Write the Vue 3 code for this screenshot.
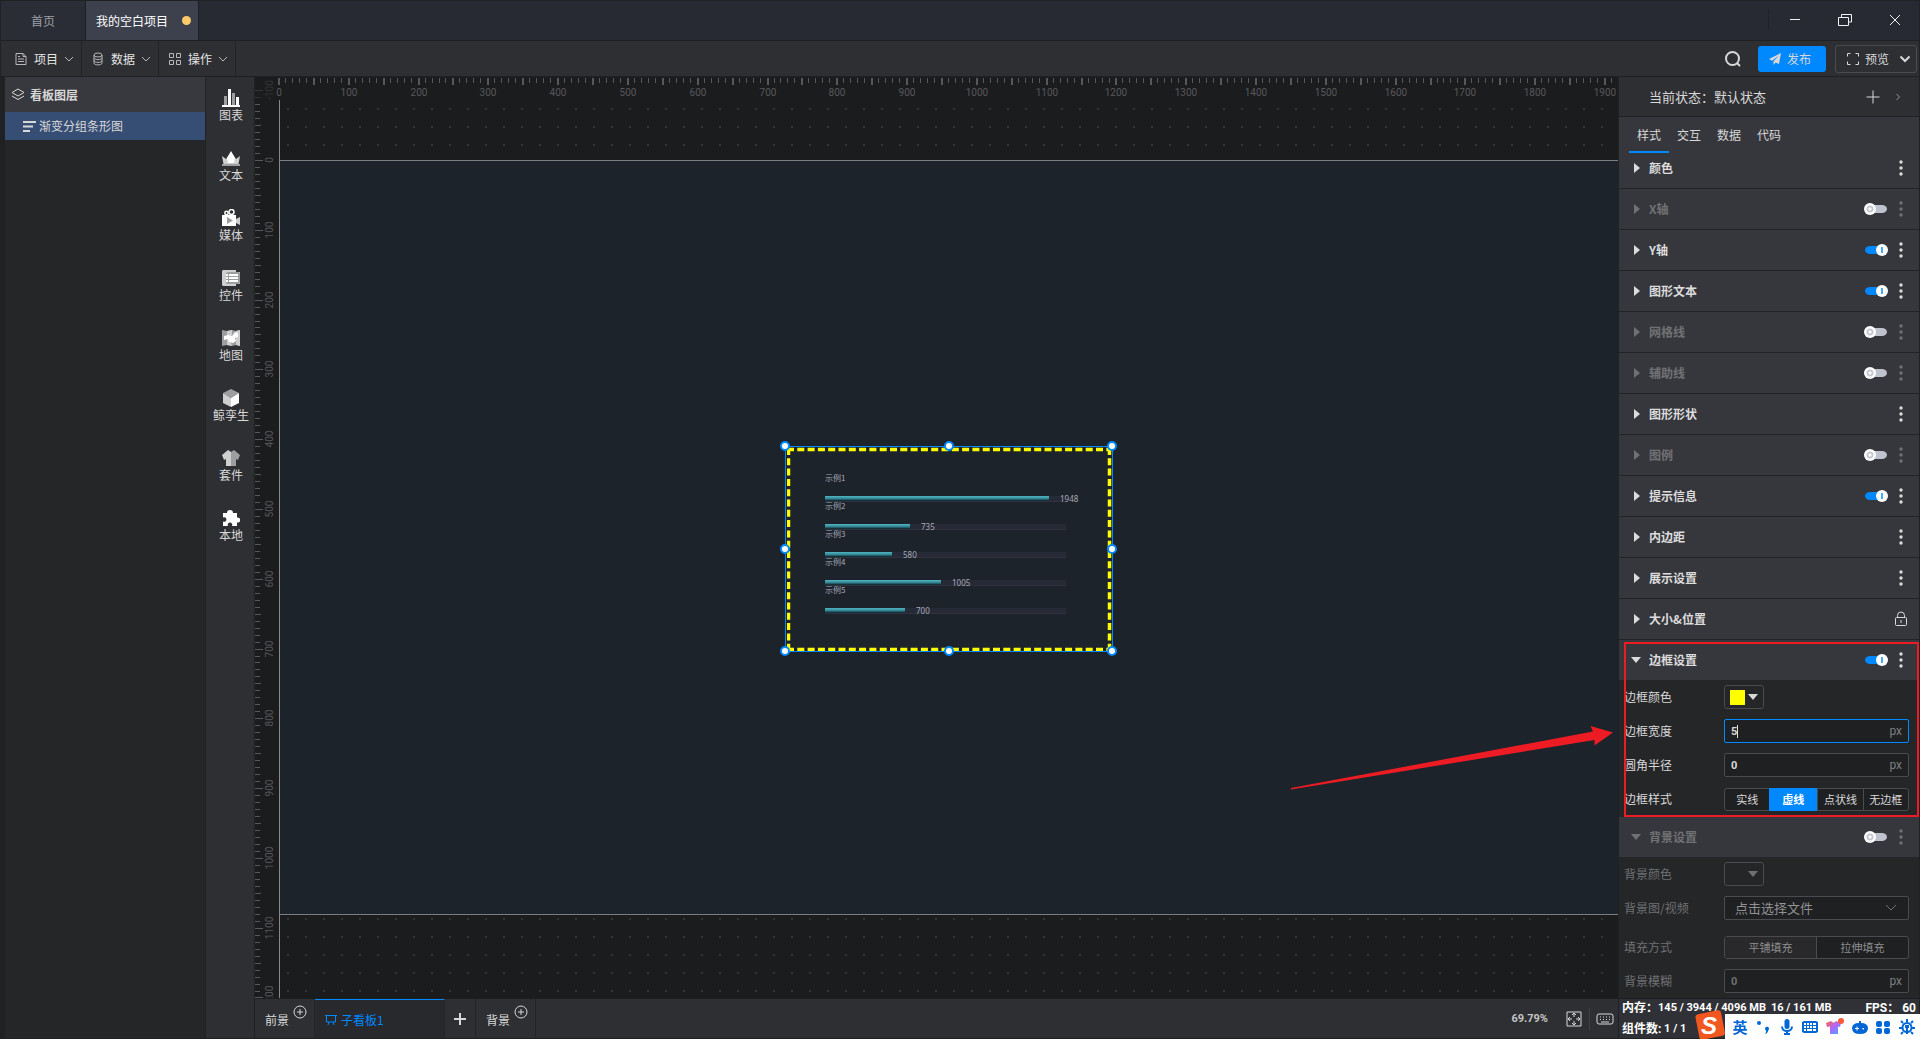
<script setup>
import { ref } from 'vue'

const menus = [
  { name: '项目', icon: 'doc' },
  { name: '数据', icon: 'db' },
  { name: '操作', icon: 'grid' },
]

const tools = [
  { name: '图表', icon: 'chart' },
  { name: '文本', icon: 'text' },
  { name: '媒体', icon: 'media' },
  { name: '控件', icon: 'widget' },
  { name: '地图', icon: 'map' },
  { name: '鲸孪生', icon: 'cube' },
  { name: '套件', icon: 'shirt' },
  { name: '本地', icon: 'puzzle' },
]

const tabs = ['样式', '交互', '数据', '代码']

const sections = ref([
  { name: '颜色' },
  { name: 'X轴', toggle: true, on: false },
  { name: 'Y轴', toggle: true, on: true },
  { name: '图形文本', toggle: true, on: true },
  { name: '网格线', toggle: true, on: false },
  { name: '辅助线', toggle: true, on: false },
  { name: '图形形状' },
  { name: '图例', toggle: true, on: false },
  { name: '提示信息', toggle: true, on: true },
  { name: '内边距' },
  { name: '展示设置' },
  { name: '大小&位置', lock: true },
])

const borderOn = ref(true)
const backgroundOn = ref(false)
const borderWidth = ref('5')
const borderRadius = ref('0')
const blur = ref('0')
const borderStyle = ref('虚线')
const borderStyles = ['实线', '虚线', '点状线', '无边框']

const zoom = 0.6979
const ticksFrom = (start, end) => {
  const list = []
  for (let v = start; v <= end; v += 10) {
    list.push({ v, at: Math.round(v * zoom), major: v % 100 === 0, half: v % 50 === 0 })
  }
  return list
}
const xTicks = ticksFrom(0, 1920)
const yTicks = ticksFrom(-100, 1200)

const bars = [
  { name: '示例1', value: 1948 },
  { name: '示例2', value: 735 },
  { name: '示例3', value: 580 },
  { name: '示例4', value: 1005 },
  { name: '示例5', value: 700 },
]
const barWidth = (v) => Math.round((v / 1948) * 224) + 'px'
</script>

<template>
  <div class="app">
    <header class="titlebar">
      <button class="page-tab">首页</button>
      <button class="page-tab active">我的空白项目<i class="unsaved"></i></button>
      <div class="window-buttons">
        <button aria-label="最小化"><svg width="14" height="14" viewBox="0 0 14 14"><path d="M2 6.500h10" /></svg></button>
        <button aria-label="还原"><svg width="14" height="14" viewBox="0 0 14 14"><path d="M.5 4.500h10v8h-10zM3.500 4V1.500h10v7.500h-3" /></svg></button>
        <button aria-label="关闭"><svg width="14" height="14" viewBox="0 0 14 14"><path d="M2 2l10 10M12 2L2 12" /></svg></button>
      </div>
    </header>

    <nav class="toolbar">
      <button v-for="m in menus" :key="m.name" class="menu">
        <svg v-if="m.icon === 'doc'" width="12" height="14" viewBox="0 0 12 14"><path d="M1 1.500h7l3 3v8H1zM8 1.500v3h3M3 7h6M3 9.500h6M3 4.500h2" /></svg>
        <svg v-else-if="m.icon === 'db'" width="12" height="14" viewBox="0 0 12 14"><ellipse cx="6" cy="3" rx="4" ry="2" /><path d="M2 3v8c0 2.500 8 2.500 8 0V3M2 5.700c0 2.500 8 2.500 8 0M2 8.500c0 2.500 8 2.500 8 0" /></svg>
        <svg v-else width="12" height="14" viewBox="0 0 12 14"><path d="M.5 1.500h4v4h-4zM7.500 1.500h4v4h-4zM.5 8.500h4v4h-4zM7.500 8.500h4v4h-4z" /></svg>
        <span>{{ m.name }}</span>
        <svg width="10" height="6" viewBox="0 0 10 6"><path d="M1 1l4 4 4-4" /></svg>
      </button>
      <div class="actions">
        <button class="search" aria-label="搜索"><svg width="18" height="18" viewBox="0 0 18 18"><circle cx="8.500" cy="8.500" r="6.500" /><path d="M13 13l3 3" /></svg></button>
        <button class="publish">
          <svg width="12" height="12" viewBox="0 0 12 12"><path d="M12 0L0 6l3 1.700L10 2.500 4.500 8.300V12l2-2.500L10 11z" /></svg>发布
        </button>
        <button class="preview">
          <svg width="14" height="14" viewBox="0 0 14 14"><path d="M1.500 4.500v-3h3M9.500 1.500h3v3M12.500 9.500v3h-3M4.500 12.500h-3v-3" /></svg>预览
          <svg class="chev" width="12" height="8" viewBox="0 0 12 8"><path d="M1.500 1.500L6 6l4.500-4.500" /></svg>
        </button>
      </div>
    </nav>

    <main class="workspace">
      <aside class="layers">
        <h2>
          <svg width="14" height="13" viewBox="0 0 14 13"><path d="M7 1l6 3.500L7 8 1 4.500zM1 8l6 3.500L13 8" /></svg>看板图层
        </h2>
        <button class="layer">
          <svg width="13" height="11" viewBox="0 0 13 11"><path d="M0 1h13M0 5.500h10M0 10h7" /></svg>渐变分组条形图
        </button>
      </aside>

      <aside class="toolbox">
        <button v-for="t in tools" :key="t.name">
          <svg width="18" height="18" viewBox="0 0 18 18">
            <template v-if="t.icon === 'chart'">
              <path class="g" d="M2 7h3v9H2zM10 4h3v12h-3z" /><path class="w" d="M6 0h3v16H6zM14 8h3v8h-3zM0 16h18v2H0z" />
            </template>
            <template v-else-if="t.icon === 'text'">
              <path class="l" d="M0 7l4 3 5-7 5 7 4-3-1.500 8h-15z" /><path class="w" d="M9 2l4 7-1 5H6L5 9z" /><path class="g" d="M0 15h18v2H0z" />
            </template>
            <template v-else-if="t.icon === 'media'">
              <path class="l" d="M14 10l4-2v8l-4-2z" /><path class="w" d="M0 6h14v11H0z" /><path class="g" d="M5 8l6 3.500L5 15z" /><circle class="ring" cx="4.500" cy="4" r="1.700" /><circle class="ring" cx="9.500" cy="3" r="2.500" />
            </template>
            <template v-else-if="t.icon === 'widget'">
              <path class="l" d="M1 1h13v2h4v12h-4v2H1L0 16V2z" /><path class="g" d="M6 3h11l1 1v10l-1 1H5L4 14V4z" /><path class="w" d="M4 5h2v2H4zM7 5h9v2H7zM4 8h2v2H4zM7 8h9v2H7zM4 11h2v2H4zM7 11h9v2H7z" />
            </template>
            <template v-else-if="t.icon === 'map'">
              <path class="g" d="M0 1l5 1 5-1 4 1 4-1v16l-4-1-4 1-5-1-5 1z" /><path class="l" d="M5 2l5-1v5L7 9l3 8-5-1zM14 2l4-1v16l-4-1z" /><path class="w" d="M2 7l4-1 4 1 3-4 3 1v4l-3 1 1 3-3 2-4-1-1-3-4 1z" />
            </template>
            <template v-else-if="t.icon === 'cube'">
              <path class="g" d="M9 0l8 4-8 5-8-5z" /><path class="l" d="M1 4l8 5v9l-8-4z" /><path class="w" d="M17 4L9 9v9l8-4z" />
            </template>
            <template v-else-if="t.icon === 'shirt'">
              <path class="l" d="M6 1l3 2v14H4V10L2 11 0 6z" /><path class="g" d="M12 1L9 3v14h5V10l2 1 2-5z" />
            </template>
            <path v-else class="w" d="M1 4h4a3 3 0 1 1 6 0h4v4.500a2.600 2.600 0 1 1 0 5V17h-5a2.300 2.300 0 1 0-4 0H1v-4.500a2.300 2.300 0 1 0 0-4z" />
          </svg>
          {{ t.name }}
        </button>
      </aside>

      <section class="editor">
        <div class="canvas">
          <svg class="ruler ruler-x" aria-hidden="true">
            <g v-for="t in xTicks" :key="t.v">
              <rect :x="t.at - 1" y="1" :width="t.half ? 2 : 1" :height="t.half ? 7 : 5" />
              <text v-if="t.major" :x="t.at" y="19">{{ t.v }}</text>
            </g>
          </svg>
          <svg class="ruler ruler-y" aria-hidden="true">
            <g v-for="t in yTicks" :key="t.v" :transform="`translate(0 ${t.at + 83})`" :opacity="t.v < -80 ? 0.4 : 1">
              <rect x="0" y="0" :width="t.major ? 8 : t.half ? 6 : 5" height="1" />
              <text v-if="t.major" transform="rotate(-90)" :y="18">{{ t.v }}</text>
            </g>
          </svg>
          <div class="stage">
            <div class="board">
              <div class="component">
                <svg class="dashes" width="326" height="204" aria-hidden="true">
                  <path d="M0 2.500h324M0 202.500h324M1.500 1v203M322.500 1v203" />
                </svg>
                <div v-for="b in bars" :key="b.name" class="bar-row">
                  <div class="bar-name">{{ b.name }}</div>
                  <div class="track">
                    <div class="bar" :style="{ width: barWidth(b.value) }"></div>
                    <span>{{ b.value }}</span>
                  </div>
                </div>
                <i v-for="h in ['nw', 'n', 'ne', 'w', 'e', 'sw', 's', 'se']" :key="h" class="handle" :class="h"></i>
              </div>
            </div>
          </div>
          <svg class="arrow" width="322" height="64" viewBox="0 0 322 64" aria-hidden="true"><path d="M0 62L302 5.500 299.500 0 322 6.500 303.500 19.500V14L0 63.500z" /></svg>
        </div>

        <footer class="boards">
          <button class="plane">前景<svg width="14" height="14" viewBox="0 0 14 14"><circle cx="7" cy="7" r="6" /><path d="M4 7h6M7 4v6" /></svg></button>
          <button class="sub">
            <svg width="12" height="12" viewBox="0 0 12 12"><path d="M0 1.500h12M1.500 1.500v6.500h9V1.500M4 8l-1 3M8 8l1 3" /></svg>子看板1
          </button>
          <button class="add" aria-label="新增"><svg width="12" height="12" viewBox="0 0 12 12"><path d="M6 0v12M0 6h12" /></svg></button>
          <button class="plane">背景<svg width="14" height="14" viewBox="0 0 14 14"><circle cx="7" cy="7" r="6" /><path d="M4 7h6M7 4v6" /></svg></button>
          <span class="zoom">69.79%</span>
          <button class="fit" aria-label="适应画布"><svg width="16" height="16" viewBox="0 0 16 16"><path d="M1 1h14v14H1z" /><path d="M8 2v4M6 4l2-2 2 2M8 14v-4M6 12l2 2 2-2M2 8h4M4 6L2 8l2 2M14 8h-4M12 6l2 2-2 2" /></svg></button>
          <button class="keys" aria-label="快捷键"><svg width="18" height="14" viewBox="0 0 18 14"><rect x="1" y="2" width="16" height="10" rx="2" /><path d="M4 5h1M7 5h1M10 5h1M13 5h1M4 7.500h1M7 7.500h1M10 7.500h1M13 7.500h1M5 10h8" /></svg></button>
        </footer>
      </section>

      <aside class="inspector">
        <div class="state">
          <span>当前状态：默认状态</span>
          <button aria-label="新增状态"><svg width="14" height="14" viewBox="0 0 14 14"><path d="M7 .5v13M.5 7h13" /></svg></button>
          <button class="next" aria-label="展开"><svg width="6" height="8" viewBox="0 0 6 8"><path d="M1.500 1L4.500 4l-3 3" /></svg></button>
        </div>
        <div class="tabs">
          <button v-for="(t, i) in tabs" :key="t" :class="{ active: i === 0 }">{{ t }}</button>
        </div>

        <div v-for="s in sections" :key="s.name" class="section" :class="{ off: s.toggle && !s.on }">
          <button class="title">{{ s.name }}</button>
          <input v-if="s.toggle" v-model="s.on" type="checkbox" class="switch" :aria-label="s.name" />
          <button class="more" :aria-label="s.name + '选项'">
            <svg v-if="s.lock" width="14" height="16" viewBox="0 0 14 16"><rect x="1.500" y="6.500" width="11" height="8" rx="1" /><path d="M3.500 6V4.500a3.500 3.500 0 0 1 7 0V6M7 9v3" /></svg>
            <svg v-else class="dots" width="4" height="16" viewBox="0 0 4 16"><circle cx="2" cy="2" r="1.700" /><circle cx="2" cy="8" r="1.700" /><circle cx="2" cy="14" r="1.700" /></svg>
          </button>
        </div>

        <div class="group highlighted">
          <div class="section open">
            <button class="title">边框设置</button>
            <input v-model="borderOn" type="checkbox" class="switch" aria-label="边框设置" />
            <button class="more" aria-label="边框设置选项"><svg class="dots" width="4" height="16" viewBox="0 0 4 16"><circle cx="2" cy="2" r="1.700" /><circle cx="2" cy="8" r="1.700" /><circle cx="2" cy="14" r="1.700" /></svg></button>
          </div>
          <div class="fields">
            <div class="field">
              <label for="border-color">边框颜色</label>
              <button id="border-color" class="color"><i class="swatch yellow"></i><i class="down"></i></button>
            </div>
            <div class="field">
              <label for="border-width">边框宽度</label>
              <div class="box focused"><input id="border-width" v-model="borderWidth" type="text" /><span>px</span></div>
            </div>
            <div class="field">
              <label for="border-radius">圆角半径</label>
              <div class="box"><input id="border-radius" v-model="borderRadius" type="text" /><span>px</span></div>
            </div>
            <div class="field">
              <span class="label">边框样式</span>
              <div class="segments">
                <button v-for="s in borderStyles" :key="s" :class="{ active: s === borderStyle }" @click="borderStyle = s">{{ s }}</button>
              </div>
            </div>
          </div>
        </div>

        <div class="group off">
          <div class="section open off">
            <button class="title">背景设置</button>
            <input v-model="backgroundOn" type="checkbox" class="switch" aria-label="背景设置" />
            <button class="more" aria-label="背景设置选项"><svg class="dots" width="4" height="16" viewBox="0 0 4 16"><circle cx="2" cy="2" r="1.700" /><circle cx="2" cy="8" r="1.700" /><circle cx="2" cy="14" r="1.700" /></svg></button>
          </div>
          <div class="fields">
            <div class="field">
              <label for="bg-color">背景颜色</label>
              <button id="bg-color" class="color"><i class="swatch"></i><i class="down"></i></button>
            </div>
            <div class="field spaced">
              <label for="bg-file">背景图/视频</label>
              <div class="box file">
                <select id="bg-file"><option>点击选择文件</option></select>
                <svg width="12" height="8" viewBox="0 0 12 8"><path d="M1 1l5 5 5-5" /></svg>
              </div>
            </div>
            <div class="field">
              <span class="label">填充方式</span>
              <div class="segments">
                <button class="chosen">平铺填充</button>
                <button>拉伸填充</button>
              </div>
            </div>
            <div class="field">
              <label for="bg-blur">背景模糊</label>
              <div class="box"><input id="bg-blur" v-model="blur" type="text" /><span>px</span></div>
            </div>
          </div>
        </div>

        <div class="status">
          <div class="line-row"><span>内存：</span><span class="figures">145 / 3944 / 4096 MB</span><span class="figures gap">16 / 161 MB</span><span class="fps">FPS：&nbsp;60</span></div>
          <div class="line-row"><span>组件数:</span><span class="figures">&nbsp;1 / 1</span></div>
          <div class="ime">
            <svg class="sogou" width="31" height="30" viewBox="0 0 31 30"><rect x="3" y="3" width="26" height="26" rx="3" transform="rotate(-11 16 15)" /><text x="15" y="25">S</text></svg>
            <span>英</span>
            <svg width="16" height="16" viewBox="0 0 16 16"><circle cx="4" cy="4" r="2" /><path d="M10 9.500a2 2 0 1 1 3.500 1.500Q13 14 10 15q1.500-2 1-3.500a2 2 0 0 1-1-2z" /></svg>
            <svg width="16" height="16" viewBox="0 0 16 16"><rect x="5.500" y="0" width="5" height="10" rx="2.500" /><path class="line" d="M3 7.500c0 6 10 6 10 0M8 12v3M5 15h6" /></svg>
            <svg width="16" height="16" viewBox="0 0 16 16"><path fill-rule="evenodd" d="M2 2h12l2 1v10l-2 1H2l-2-1V3zM2 4v2h2V4zm3 0v2h2V4zm3 0v2h2V4zm3 0v2h3V4zM2 7v2h2V7zm3 0v2h2V7zm3 0v2h2V7zm3 0v2h3V7zM2 10v2h2v-2zm3 0v2h5v-2zm6 0v2h3v-2z" /></svg>
            <svg width="18" height="18" viewBox="0 0 18 18">
              <defs><linearGradient id="shirt" x2="1" y2="1"><stop offset="0" stop-color="#ff6540" /><stop offset=".5" stop-color="#b266ff" /><stop offset="1" stop-color="#30b4ff" /></linearGradient></defs>
              <path fill="url(#shirt)" d="M0 5l5-2q3 3 5 0l5 2-1 4-2-.5V16H4V8.500L1 9z" /><circle cx="15" cy="3" r="3" fill="#ff5a36" />
            </svg>
            <svg width="16" height="16" viewBox="0 0 16 16"><path fill-rule="evenodd" d="M7 4V2h2v2q7 0 7 5.500Q15.500 15 8 15T0 9.500Q0 4 7 4zM3 9h1.500V7.500h1V9H7v1H5.500v1.500h-1V10H3zm7.500 0v1.500H12V9z" /></svg>
            <svg width="16" height="16" viewBox="0 0 16 16"><rect x="1" y="2" width="6" height="6" rx="2" /><rect x="9" y="2" width="6" height="6" rx="2" /><rect x="1" y="9" width="6" height="6" rx="2" /><rect x="9" y="9" width="6" height="6" rx="2" /></svg>
            <svg width="16" height="16" viewBox="0 0 16 16"><path class="gear" d="M8 0v3M2 2l2 2M12 4l2-2M0 9h3M13 9h3M2 15l2-2M14 15l-2-2" /><circle class="gear" cx="8" cy="8.500" r="4.500" /><path d="M6 6h4v3H9v6H7V9H6z" /></svg>
          </div>
        </div>
      </aside>
    </main>
  </div>
</template>

<style>
body {
  margin: 0;
  background: #1f2022;
}
</style>

<style scoped>
* {
  box-sizing: border-box;
}
.app {
  display: flex;
  flex-direction: column;
  min-height: 100vh;
  padding: 1px;
  background: #202123;
  color: #d8d8d8;
  font: 12px/16px 'Noto Sans CJK SC', sans-serif;
}
button,
input,
select {
  margin: 0;
  padding: 0;
  border: 0;
  outline: 0;
  background: none;
  color: inherit;
  font: inherit;
}
button {
  white-space: nowrap;
}
svg {
  flex: none;
  fill: none;
  stroke: currentColor;
}

.titlebar {
  display: flex;
  height: 40px;
  border-bottom: 1px solid #1f2022;
  background: #272a32;
}
.page-tab {
  display: flex;
  align-items: center;
  justify-content: space-between;
  padding: 0 30px;
  border-right: 1px solid #1e1f22;
  background: #2a2d35;
  color: #9b9ea5;
}
.page-tab.active {
  width: 113px;
  padding: 0 7px 0 10px;
  background: #3d414d;
  color: #fff;
}
.unsaved {
  width: 9px;
  height: 9px;
  border-radius: 50%;
  background: #ffc96b;
}
.window-buttons {
  display: flex;
  margin: 8px 0 10px auto;
  border-left: 1px solid #1f2126;
  color: #f2f2f2;
}
.window-buttons button {
  width: 50px;
}
.window-buttons svg {
  display: block;
  margin: 0 17px 0 19px;
}

.toolbar {
  display: flex;
  height: 36px;
  border-bottom: 1px solid #1f2022;
  background: #2e2f33;
}
.menu {
  display: flex;
  align-items: center;
  width: 77px;
  padding-left: 10px;
  border-right: 1px solid #212225;
  color: #e4e4e4;
}
.menu:first-child {
  width: 81px;
  padding-left: 14px;
}
.menu span {
  margin: 0 6px 0 7px;
}
.menu svg {
  color: #b8b8b8;
}
.actions {
  display: flex;
  align-items: center;
  margin-left: auto;
  padding-right: 2px;
}
.search {
  height: 18px;
  margin-right: 16px;
}
.search svg,
.preview .chev {
  stroke-width: 2;
}
.publish,
.preview {
  display: flex;
  align-items: center;
  height: 26px;
  border-radius: 3px;
}
.publish {
  width: 68px;
  gap: 6px;
  margin-right: 9px;
  padding-left: 11px;
  background: #0088ff;
}
.publish svg {
  fill: currentColor;
  stroke: none;
}
.preview {
  width: 82px;
  height: 28px;
  gap: 5px;
  padding-left: 10px;
  border: 1px solid #4a4b4f;
}
.preview .chev {
  margin-left: 5px;
}

.workspace {
  display: grid;
  flex: 1;
  grid-template-columns: 200px 48px minmax(0, 1fr) 300px;
  column-gap: 1px;
  padding-left: 4px;
  background: #202123;
}
.layers {
  background: #252628;
}
.layers h2 {
  display: flex;
  align-items: center;
  gap: 5px;
  height: 35px;
  margin: 0;
  padding-left: 6px;
  background: #38393e;
  font-size: 12px;
}
.layer {
  display: flex;
  align-items: center;
  gap: 3px;
  width: 100%;
  height: 28px;
  padding-left: 18px;
  background: #364d74;
}
.layer svg {
  stroke-width: 2;
}
.toolbox {
  padding-top: 12px;
  background: #2e2f33;
}
.toolbox button {
  display: flex;
  flex-direction: column;
  align-items: center;
  width: 50px;
  height: 60px;
}
.toolbox svg {
  stroke: none;
}
.w {
  fill: #fff;
}
.l {
  fill: #cfcfd0;
}
.g {
  fill: #9d9ea0;
}
.ring {
  stroke: #fff;
  stroke-width: 1.5;
}

.editor {
  display: flex;
  flex-direction: column;
}
.canvas {
  position: relative;
  display: grid;
  flex: 1;
  grid-template-rows: 23px minmax(0, 1fr);
  grid-template-columns: 24px minmax(0, 1fr);
  overflow: hidden;
  background: #1b1c1e;
}
.ruler {
  display: block;
  width: 100%;
  height: 100%;
  fill: #58585a;
  stroke: none;
  font: 10px Roboto, sans-serif;
}
.ruler text {
  text-anchor: middle;
}
.ruler-x {
  grid-area: 1 / 2;
  overflow: visible;
}
.ruler-y {
  grid-area: 1 / 1 / 3 / 2;
}
.stage {
  grid-area: 2 / 2;
  padding-top: 60px;
  border-left: 1px solid #87888a;
  background: radial-gradient(circle, #343537 1px, transparent 1px) -1px 0 / 18px 18px;
}
.board {
  position: relative;
  height: 755px;
  border: solid #7e7e80;
  border-width: 1px 0;
  background: #1c232b;
}
.component {
  position: absolute;
  top: 285px;
  left: 505px;
  width: 328px;
  height: 206px;
  padding: 24px 0 0 39px;
  border: 1px solid #0088ff;
}
.dashes {
  position: absolute;
  top: 0;
  left: 1px;
  stroke: #ffff00;
  stroke-width: 3.5;
  stroke-dasharray: 7 3.3;
}
.bar-row {
  width: 241px;
  height: 28px;
  color: #a6a9b8;
  font-size: 8px;
  line-height: 14px;
}
.track {
  display: flex;
  align-items: center;
  height: 6px;
  margin-top: 11px;
  border-bottom: 1px solid #30313c;
  background: #262a36;
  font-family: 'Noto Sans', sans-serif;
}
.track span {
  margin-left: 11px;
}
.bar {
  flex: none;
  height: 5px;
  background: linear-gradient(#52b6c4, #328896 50%, #0d1c22);
}
.handle {
  position: absolute;
  width: 10px;
  height: 10px;
  margin: -5px;
  border: 2px solid #0088ff;
  border-radius: 50%;
  background: #fff;
}
.nw, .n, .ne { top: -1px; }
.w.handle, .e { top: 50%; }
.sw, .s, .se { top: 100%; }
.nw, .w.handle, .sw { left: -1px; }
.n, .s { left: 50%; }
.ne, .e, .se { left: 100%; }
.arrow {
  position: absolute;
  right: 5px;
  bottom: 208px;
  fill: #ed1c24;
  stroke: none;
}

.boards {
  display: flex;
  align-items: center;
  height: 40px;
  border-top: 1px solid #1d1e20;
  background: #2e2f33;
}
.boards button {
  display: flex;
  align-items: center;
}
.plane,
.sub,
.add {
  height: 39px;
  border-right: 1px solid #232427;
}
.plane {
  width: 60px;
  padding: 2px 0 0 10px;
}
.plane svg {
  margin: -16px 0 0 4px;
}
.boards .sub {
  width: 130px;
  gap: 4px;
  padding: 2px 0 0 10px;
  border-top: 1px solid #0088ff;
  background: #28292c;
  color: #0088ff;
}
.boards .add {
  width: 31px;
  justify-content: center;
}
.add svg {
  stroke-width: 2;
}
.zoom {
  margin-left: auto;
  font: bold 11px/16px Roboto, sans-serif;
  color: #c4c4c4;
}
.fit {
  height: 22px;
  margin-left: 18px;
  padding-right: 7px;
  border-right: 1px solid #3f4044;
}
.keys {
  margin: 0 4px 0 6px;
}

.inspector {
  display: flex;
  flex-direction: column;
  min-width: 0;
  background: #252628;
}
.state {
  display: flex;
  align-items: center;
  height: 40px;
  padding: 0 18px 0 30px;
  border-bottom: 1px solid #1f2022;
  background: #2e2f33;
  font-size: 13px;
}
.state span {
  margin-right: auto;
}
.state button {
  display: flex;
}
.state .next {
  margin-left: 15px;
  color: #96979a;
}
.tabs {
  display: flex;
  height: 31px;
  padding-left: 10px;
  background: #36373c;
}
.tabs button {
  position: relative;
  z-index: 1;
  width: 40px;
  height: 36px;
  padding-top: 2px;
  border-bottom: 2px solid transparent;
}
.tabs .active {
  border-color: #0088ff;
}
.section {
  display: flex;
  align-items: center;
  height: 41px;
  padding-left: 15px;
  border-bottom: 1px solid #222326;
  background: #36373c;
}
.section.open {
  height: 40px;
  border: 0;
}
.title {
  display: flex;
  align-items: center;
  margin-right: auto;
  color: #dcdcdc;
  font-weight: bold;
}
.title::before {
  width: 6px;
  height: 10px;
  margin-right: 9px;
  background: #dcdcdc;
  clip-path: polygon(0 0, 100% 50%, 0 100%);
  content: '';
}
.open .title::before {
  width: 10px;
  height: 6px;
  margin: 0 8px 0 -3px;
  clip-path: polygon(0 0, 100% 0, 50% 100%);
}
.off > .title,
.off > .more {
  opacity: 0.35;
}
.switch {
  position: relative;
  width: 24px;
  height: 12px;
  border: solid transparent;
  border-width: 2px 1px;
  border-radius: 6px;
  appearance: none;
  background: #bfc3ce padding-box;
}
.switch:checked {
  background-color: #0088ff;
}
.switch::before {
  position: absolute;
  top: -2px;
  left: -1px;
  width: 12px;
  height: 12px;
  border-radius: 50%;
  background: radial-gradient(circle, #fff 1px, #c4c8d0 2px, #c4c8d0 3px, #fff 4px);
  content: '';
}
.switch:checked::before {
  left: 11px;
  background: linear-gradient(#4aa8ff, #4aa8ff) center / 2px 6px no-repeat #fff;
}
.more {
  display: flex;
  justify-content: center;
  width: 14px;
  margin: 0 11px 0 6px;
}
.dots {
  fill: #dcdcdc;
  stroke: none;
}
.group {
  position: relative;
}
.highlighted::after {
  position: absolute;
  inset: 2px 0 0 5px;
  border: 2px solid #ed1c24;
  content: '';
  pointer-events: none;
}
.fields {
  display: flex;
  flex-direction: column;
  gap: 10px;
  padding: 5px 10px 6px 5px;
}
.field {
  display: grid;
  grid-template-columns: 100px minmax(0, 1fr);
  align-items: center;
  height: 24px;
}
.spaced {
  margin-bottom: 5px;
}
.group.off .fields {
  padding-bottom: 5px;
  color: #6f7073;
}
.color {
  display: flex;
  align-items: center;
  gap: 3px;
  width: 40px;
  height: 24px;
  padding-left: 5px;
  border: 1px solid #4a4b4e;
  border-radius: 3px;
}
.swatch {
  width: 15px;
  height: 15px;
}
.yellow {
  background: #ffff00;
}
.down {
  width: 10px;
  height: 6px;
  background: currentColor;
  clip-path: polygon(0 0, 100% 0, 50% 100%);
}
.box {
  display: flex;
  align-items: center;
  height: 24px;
  padding: 0 6px;
  border: 1px solid #4a4b4e;
  border-radius: 2px;
  background: #1f2022;
  font: 12px/16px Roboto, sans-serif;
}
.box input {
  flex: 1;
  min-width: 0;
  height: 20px;
  font-size: 11px;
  font-weight: bold;
}
.box span {
  color: #7d7e80;
}
.box.focused {
  border-color: #0088ff;
}
.focused input {
  background: linear-gradient(#e0e0e0, #e0e0e0) 6px center / 1px 13px no-repeat;
}
.file select {
  flex: 1;
  padding-left: 4px;
  appearance: none;
  font: 13px/18px 'Noto Sans CJK SC', sans-serif;
  color: #929294;
}
.file svg {
  margin-right: 5px;
}
.segments {
  display: flex;
  height: 23px;
  border: 1px solid #4a4b4e;
  border-radius: 3px;
  background: #1f2022;
  font-size: 11px;
}
.segments button {
  flex: 1;
}
.segments button + button {
  border-left: 1px solid #4a4b4e;
}
.segments button.active {
  flex: 0 0 48px;
  margin: -1px 0;
  border: 0;
  background: #0088ff;
  color: #fff;
  font-weight: bold;
}
.segments .chosen {
  background: #29292b;
}
.group.off .segments {
  color: #8c8d8f;
}
.status {
  position: relative;
  display: flex;
  flex: 1;
  flex-direction: column;
  gap: 5px;
  padding: 1px 3px;
  border-top: 1px solid #1b1c1e;
  background: #303136;
  color: #fff;
  font-family: Roboto, 'Noto Sans CJK SC', sans-serif;
  font-weight: bold;
  line-height: 16px;
}
.line-row {
  display: flex;
}
.figures {
  font-size: 11px;
}
.gap {
  margin-left: 5px;
}
.fps {
  margin-left: auto;
}
.ime {
  position: absolute;
  right: -1px;
  bottom: -1px;
  display: flex;
  align-items: center;
  justify-content: space-between;
  width: 195px;
  height: 25px;
  padding: 0 5px 0 0;
  background: #fff;
  color: #0067d5;
}
.ime span {
  font: bold 15px/20px 'Noto Sans CJK SC', sans-serif;
}
.ime svg {
  fill: currentColor;
  stroke: none;
}
.ime .line,
.ime .gear {
  fill: none;
  stroke: currentColor;
  stroke-width: 2;
}
.ime .sogou {
  align-self: flex-end;
  margin-left: -31px;
  fill: #f2571f;
}
.sogou text {
  fill: #fff;
  font: italic bold 24px 'Liberation Sans', sans-serif;
  text-anchor: middle;
}
</style>
